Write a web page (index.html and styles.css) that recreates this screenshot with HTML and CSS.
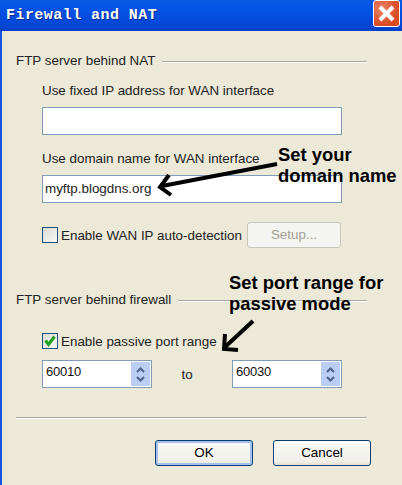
FILE: index.html
```html
<!DOCTYPE html>
<html lang="en">
<head>
  <meta charset="UTF-8" />
  <title>Firewall and NAT</title>
  <link rel="stylesheet" href="styles.css">
</head>
<body>
  <div class="window">
    <div class="titlebar">
      <span class="title">Firewall and NAT</span>
      <div class="close">
        <svg width="19" height="19" viewBox="0 0 19 19"><path d="M3 3L16 16M16 3L3 16" stroke="#fff" stroke-width="4" fill="none"/></svg>
      </div>
    </div>

    <div class="content">
      <div class="legend">
        <span>FTP server behind NAT</span>
        <div class="rule"></div>
      </div>
      <div class="group">
        <div class="field-label first">Use fixed IP address for WAN interface</div>
        <div class="textbox"></div>
        <div class="field-label second">Use domain name for WAN interface</div>
        <div class="textbox">myftp.blogdns.org</div>
        <div class="check-row wan">
          <div class="check"></div>
          <span class="check-label">Enable WAN IP auto-detection</span>
          <div class="btn-setup">Setup...</div>
        </div>
      </div>

      <div class="legend firewall">
        <span>FTP server behind firewall</span>
        <div class="rule"></div>
      </div>
      <div class="group">
        <div class="check-row passive">
          <div class="check">
            <svg width="14" height="14" viewBox="0 0 14 14"><path d="M2.5 6.5L5.5 10.5L11.5 2.5" stroke="#21a121" stroke-width="3" fill="none"/></svg>
          </div>
          <span class="check-label">Enable passive port range</span>
        </div>
        <div class="port-row">
          <div class="spin">
            <span class="spin-value">60010</span>
            <div class="spin-btns">
              <svg width="9" height="6" viewBox="0 0 9 6"><path d="M1 5L4.5 1.5L8 5" stroke="#4d6185" stroke-width="2" fill="none"/></svg>
              <svg width="9" height="6" viewBox="0 0 9 6"><path d="M1 1L4.5 4.5L8 1" stroke="#4d6185" stroke-width="2" fill="none"/></svg>
            </div>
          </div>
          <span class="to">to</span>
          <div class="spin">
            <span class="spin-value">60030</span>
            <div class="spin-btns">
              <svg width="9" height="6" viewBox="0 0 9 6"><path d="M1 5L4.5 1.5L8 5" stroke="#4d6185" stroke-width="2" fill="none"/></svg>
              <svg width="9" height="6" viewBox="0 0 9 6"><path d="M1 1L4.5 4.5L8 1" stroke="#4d6185" stroke-width="2" fill="none"/></svg>
            </div>
          </div>
        </div>
      </div>

      <div class="separator"></div>
      <div class="actions">
        <div class="btn btn-default">OK</div>
        <div class="btn">Cancel</div>
      </div>
    </div>
  </div>

  <!-- annotations drawn on top of the dialog -->
  <div class="note note-domain">Set your<br>domain name</div>
  <div class="note note-port">Set port range for<br>passive mode</div>
  <svg class="arrows" width="402" height="485" viewBox="0 0 402 485">
    <path d="M277 164L162 186" stroke="#000" stroke-width="4" fill="none"/>
    <path d="M169 175L160 187L171 195" stroke="#000" stroke-width="4" fill="none"/>
    <path d="M253 321L225 347" stroke="#000" stroke-width="4" fill="none"/>
    <path d="M225 334L224 349L238 350" stroke="#000" stroke-width="4" fill="none"/>
  </svg>
</body>
</html>
```

FILE: styles.css
```css
html, body {
  margin: 0;
  padding: 0;
  height: 100%;
  overflow: hidden;
  background-color: #ece9d8;
  font-family: 'Liberation Sans', Arial, sans-serif;
  font-size: 13.4px;
  color: #000;
}

.window {
  height: 485px;
  box-sizing: border-box;
  border-left: 2px solid #0855dd;
  display: flex;
  flex-direction: column;
}

.titlebar {
  height: 31px;
  margin-left: -2px;
  flex-shrink: 0;
  padding: 2px 2px 2px 6px;
  box-sizing: border-box;
  display: flex;
  align-items: center;
  justify-content: space-between;
  background: linear-gradient(#0a5ae6 0%, #0453e6 30%, #0348d8 75%, #0040c8 100%);
}

.title {
  font-family: 'Liberation Mono', monospace;
  font-weight: bold;
  font-size: 15px;
  letter-spacing: 0.45px;
  color: #fff;
  text-shadow: 1px 1px 0 #0a2a8c;
}

.close {
  width: 27px;
  height: 27px;
  box-sizing: border-box;
  margin-top: -4px;
  border: 1px solid #fff;
  border-radius: 3px;
  background: radial-gradient(circle at 30% 30%, #ea8267, #d94a22 70%);
  display: flex;
  align-items: center;
  justify-content: center;
}

.content {
  flex: 1;
  padding: 21px 35px 0 14px;
}

.legend {
  display: flex;
  align-items: center;
  gap: 7px;
  height: 16px;
  color: #222;
}

.legend.firewall {
  margin-top: 43px;
}

.rule {
  flex: 1;
  height: 1px;
  margin-top: 3px;
  background: #aca899;
  border-bottom: 1px solid #fff;
}

.group {
  padding-left: 26px;
  width: 300px;
}

.field-label {
  height: 16px;
  line-height: 16px;
  color: #222;
}

.field-label.first {
  margin-top: 15px;
  margin-bottom: 8px;
}

.field-label.second {
  margin-top: 16px;
  margin-bottom: 8px;
}

.textbox {
  height: 28px;
  box-sizing: border-box;
  border: 1px solid #7f9db9;
  background: #fff;
  padding: 0 2px;
  line-height: 26px;
  color: #222;
}

.check-row {
  display: flex;
  align-items: center;
}

.check-row.wan {
  margin-top: 19px;
  height: 26px;
}

.check-row.passive {
  margin-top: 25px;
  height: 18px;
}

.check {
  width: 16px;
  height: 16px;
  box-sizing: border-box;
  border: 1px solid #1c5180;
  background: linear-gradient(135deg, #dcdcd7, #f8f8f4);
  display: flex;
  align-items: center;
  justify-content: center;
  flex-shrink: 0;
}

.check-label {
  margin-left: 3px;
  color: #222;
}

.btn-setup {
  margin-left: auto;
  margin-right: 1px;
  width: 94px;
  height: 26px;
  box-sizing: border-box;
  border: 1px solid #c9c7ba;
  border-radius: 3px;
  background: #f4f4f0;
  color: #a1a192;
  text-align: center;
  line-height: 24px;
}

.port-row {
  display: flex;
  align-items: center;
  justify-content: space-between;
  margin-top: 10px;
}

.spin {
  width: 110px;
  height: 28px;
  box-sizing: border-box;
  border: 1px solid #7f9db9;
  background: #fff;
  display: flex;
  justify-content: space-between;
  padding: 1px;
}

.spin-value {
  padding-left: 2px;
  font-size: 13px;
  line-height: 20px;
  letter-spacing: -0.2px;
  color: #111;
}

.spin-btns {
  width: 19px;
  background: #b9cdf5;
  display: flex;
  flex-direction: column;
  align-items: center;
  justify-content: space-around;
  padding: 3px 0;
  box-sizing: border-box;
}

.to {
  margin-right: 10px;
  color: #222;
}

.separator {
  margin-top: 29px;
  height: 1px;
  background: #aca899;
  border-bottom: 1px solid #fff;
}

.actions {
  display: flex;
  justify-content: flex-end;
  gap: 20px;
  margin-top: 21px;
  margin-right: -4px;
}

.btn {
  width: 98px;
  height: 26px;
  box-sizing: border-box;
  border: 1px solid #003c74;
  border-radius: 3px;
  background: linear-gradient(#fbfbf8, #f0efe8 85%, #e3e0d4);
  text-align: center;
  line-height: 24px;
}

.btn-default {
  box-shadow: inset 0 0 0 2px #a6c0ee;
}

.note {
  position: absolute;
  font-weight: bold;
  font-size: 18.4px;
  line-height: 21px;
  color: #000;
  white-space: nowrap;
}

.note-domain {
  left: 278px;
  top: 144px;
}

.note-port {
  left: 229px;
  top: 272px;
}

.arrows {
  position: absolute;
  left: 0;
  top: 0;
}
```
